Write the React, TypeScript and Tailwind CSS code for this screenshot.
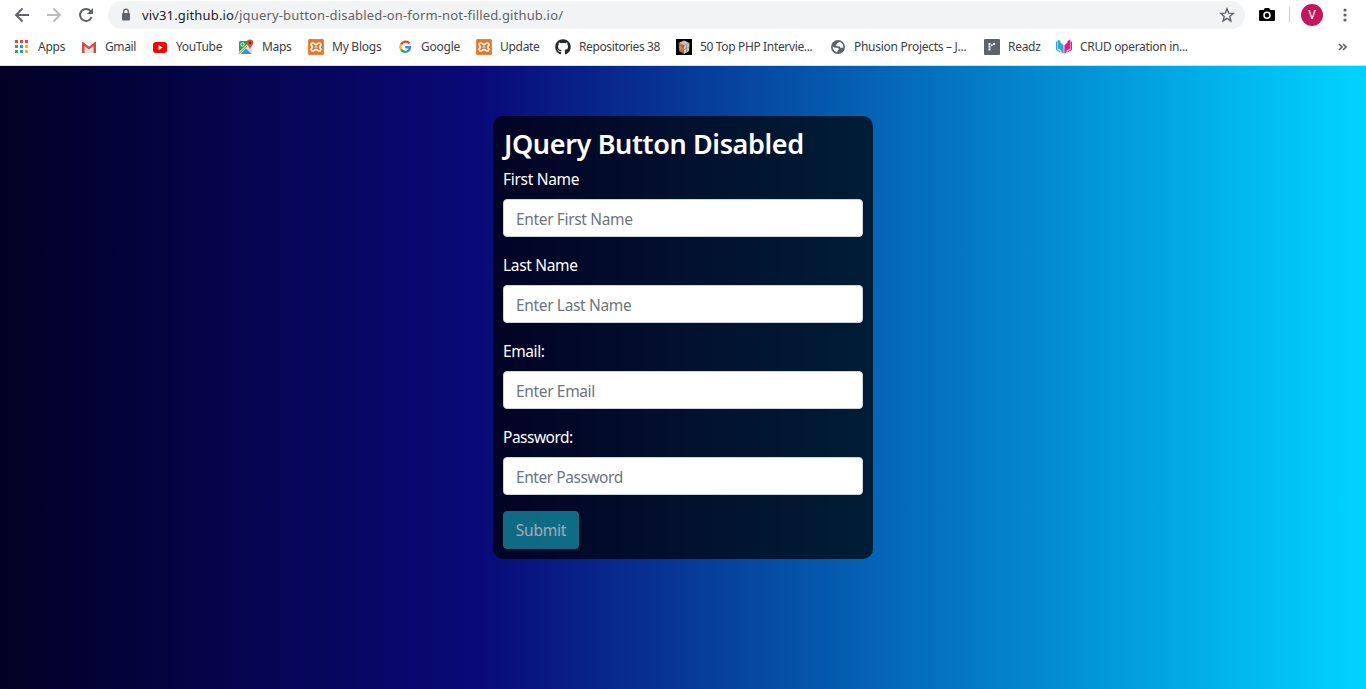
import React from "react";
import { FaGithub } from "react-icons/fa";

function Apps() {
  const c = ["#f44336", "#ea4335", "#f44336", "#34a853", "#2196f3", "#fbb305", "#34a853", "#2196f3", "#fbb305"];
  return (
    <svg width="16" height="16" viewBox="0 0 16 16" shapeRendering="crispEdges">
      {c.map((f, i) => (
        <rect key={i} x={1 + (i % 3) * 5} y={1 + Math.floor(i / 3) * 5} width="3" height="3" fill={f} />
      ))}
    </svg>
  );
}
const Gmail = () => (
  <svg width="16" height="16" viewBox="0 0 16 16">
    <path d="M2 3h12v11H2z" fill="#e3e3e3" />
    <path d="M2 3h12L8 8.500z" fill="#f6f6f6" />
    <path d="M1 14V3q0-.5.700-.300L8 7.800l6.300-5.100Q15 2.500 15 3v11h-2.500V7L8 10.600 3.500 7v7z" fill="#d54b3d" />
  </svg>
);
const YouTube = () => (
  <svg width="16" height="16" viewBox="0 0 16 16">
    <rect x="1" y="3" width="14" height="11" rx="3" fill="#f00" />
    <path d="M6.500 6v5l4.200-2.500z" fill="#fff" />
  </svg>
);
const Maps = () => (
  <svg width="16" height="16" viewBox="0 0 16 16">
    <rect x="1" y="2" width="13" height="13" rx="1" fill="#dfe3e6" />
    <path d="M2 2h8.500L9 7.500 1.500 14.500H1V3z" fill="#1ea362" />
    <path d="M2.500 15L8 9.500l5.500 5.500z" fill="#4285f4" />
    <path d="M1 13.500L10 5" stroke="#ffd34d" strokeWidth="1.100" />
    <circle cx="4.500" cy="5.500" r="1.700" fill="none" stroke="#fff" strokeWidth="0.900" />
    <path d="M12 0.500a3.300 3.300 0 0 1 3.300 3.300c0 2.400-2.700 3.500-3.300 7-.6-3.500-3.300-4.600-3.300-7A3.300 3.300 0 0 1 12 .5z" fill="#dc4b3e" />
    <circle cx="12" cy="3.700" r="1.200" fill="#7b231d" />
  </svg>
);
const Xampp = () => (
  <svg width="16" height="16" viewBox="0 0 16 16">
    <rect width="16" height="16" rx="1.500" fill="#ea6f20" />
    <rect x="0.800" y="0.800" width="14.400" height="14.400" rx="1" fill="none" stroke="#f3a572" strokeWidth="0.500" />
    <path d="M5 4C3.500 4 3 5 3.200 6L4.300 8 3.200 10c-.2 1 .3 2 1.800 2 1.200 0 1.700-.6 1.900-1.400h2.200c.2.800.7 1.400 1.900 1.400 1.500 0 2-1 1.800-2l-1.100-2 1.100-2c.2-1-.3-2-1.800-2-1.200 0-1.700.6-1.900 1.400H6.900C6.700 4.600 6.200 4 5 4z" fill="none" stroke="#fff" strokeWidth="1.700" strokeLinejoin="round" />
    <path d="M6.500 8h3" stroke="#fff" strokeWidth="1" />
  </svg>
);
const Google = () => (
  <svg width="16" height="16" viewBox="0 0 16 16" fill="none" strokeWidth="2.400">
    <path d="M12.400 4.400A5 5 0 0 0 4 5.600" stroke="#ea4335" />
    <path d="M4 5.500a5 5 0 0 0 0 5" stroke="#fbbc05" />
    <path d="M4 10.400a5 5 0 0 0 7.500 1.300" stroke="#34a853" />
    <path d="M11.300 11.800A5 5 0 0 0 13 8.200H8.200" stroke="#4285f4" />
  </svg>
);
const Cube = () => (
  <svg width="16" height="16" viewBox="0 0 16 16">
    <path d="M0 0h16v16H0z" fill="#000" />
    <path d="M2.500 4L8 1.500 13.500 4 8 6.500z" fill="#c9bdb6" />
    <path d="M2.500 4L8 6.500V15l-5-3z" fill="#b3603f" />
    <path d="M13.500 4L8 6.500V15l5-3z" fill="#cfc5bd" />
    <path d="M5 5v7.500M3 8l5 2.500" stroke="#e3a78e" strokeWidth=".6" />
    <path d="M10.500 6v8M8 10.500L13.300 8" stroke="#8d7f78" strokeWidth=".7" />
  </svg>
);
const Globe = () => (
  <svg width="16" height="16" viewBox="0 0 16 16">
    <circle cx="8" cy="8" r="7" fill="#5f6368" />
    <path d="M9.500 2.800L7.300 4.300v1.300H5.800v1.600h3.700l.9 1.500h2.900C13.500 6 12.200 3.600 9.500 2.800zM2.600 7.500c0 3 2 5.300 4.800 5.700v-1.400L9 10.200 7.800 8.800H4.700z" fill="#fff" />
  </svg>
);
const Readz = () => (
  <svg width="16" height="16" viewBox="0 0 16 16">
    <rect width="16" height="16" rx="1" fill="#5f6368" />
    <path d="M4.500 4h2v2h-2zM4.500 6.500h2v2.200h-2zM4.500 9.300h2v2.200h-2zM7 5.500h1.600v1.600H7zM9 4h2v2H9z" fill="#f5f5f5" />
  </svg>
);
const Book = () => (
  <svg width="16" height="16" viewBox="0 0 16 16">
    <path d="M0 2.500h1.200v8l3.300 1.800v1.200L0 11zM1.700.5L4.500 2v1.500l3.100 2.700V15l-2.300-2v-1.700L1.700 9.500z" fill="#2aa9dc" />
    <path d="M16 2.500h-1.200v8l-3.300 1.800v1.200L16 11zM14.300.5L11.500 2v1.500L8.400 6.200V15l2.300-2v-1.700l3.600-1.800z" fill="#ee1386" />
  </svg>
);

const marks = [
  { w: "w-[67px]", t: "Apps", s: "tracking-[-0.25px]", i: <Apps /> },
  { w: "w-[71px]", t: "Gmail", s: "tracking-[-0.4px]", i: <Gmail /> },
  { w: "w-[86px]", t: "YouTube", s: "tracking-[-0.35px]", i: <YouTube /> },
  { w: "w-[70px]", t: "Maps", s: "tracking-[-0.35px]", i: <Maps /> },
  { w: "w-[89px]", t: "My Blogs", s: "tracking-[-0.25px]", i: <Xampp /> },
  { w: "w-[79px]", t: "Google", s: "tracking-[-0.25px]", i: <Google /> },
  { w: "w-[79px]", t: "Update", s: "tracking-[-0.3px]", i: <Xampp /> },
  { w: "w-[121px]", t: "Repositories 38", s: "tracking-[-0.38px]", i: <FaGithub size={16} color="#24292e" /> },
  { w: "w-[154px]", t: "50 Top PHP Intervie...", s: "tracking-[-0.35px]", i: <Cube /> },
  { w: "w-[154px]", t: "Phusion Projects – J...", s: "tracking-[-0.28px]", i: <Globe /> },
  { w: "w-[72px]", t: "Readz", s: "tracking-[-0.3px]", i: <Readz /> },
  { w: "w-[140px]", t: "CRUD operation in...", s: "tracking-[-0.31px]", i: <Book /> },
];

const fields = [
  { label: "First Name", ph: "Enter First Name", type: "text", ls: "tracking-[-0.3px]", ps: "placeholder:tracking-[-0.35px]" },
  { label: "Last Name", ph: "Enter Last Name", type: "text", ls: "tracking-[-0.32px]", ps: "placeholder:tracking-[-0.35px]" },
  { label: "Email:", ph: "Enter Email", type: "text", ls: "tracking-[-0.4px]", ps: "placeholder:tracking-[-0.35px]" },
  { label: "Password:", ph: "Enter Password", type: "password", ls: "tracking-[-0.5px]", ps: "placeholder:tracking-[-0.45px]" },
];

export default function App() {
  return (
    <div className="flex h-[689px] w-[1366px] flex-col overflow-hidden bg-white font-['Noto_Sans',sans-serif]">
      <header className="flex h-[66px] flex-col border-b border-[#dadce0]">
        <div className="flex h-[30px] items-center">
          <svg width="108" height="30" viewBox="0 0 108 30" fill="none" strokeWidth="2" className="shrink-0">
            <path d="M29 15H16.500M22.500 8.500L16 15l6.500 6.500" stroke="#5f6368" />
            <path d="M47 15h12.500M53.500 8.500L60 15l-6.500 6.500" stroke="#babcbe" />
            <path d="M91 11.500A6 6 0 1 0 91.700 17" stroke="#5f6368" />
            <path d="M93 8v6h-6z" fill="#5f6368" />
          </svg>
          <div className="flex h-7 w-[1137px] items-center rounded-full bg-[#f1f3f4] pl-3 pr-2.5">
            <svg width="12" height="16" viewBox="0 0 12 16" className="mr-[10px] shrink-0">
              <rect x="2" y="6" width="8" height="7.500" rx="1" fill="#5f6368" />
              <path d="M3.700 6.500V4.500a2.300 2.300 0 0 1 4.600 0v2" fill="none" stroke="#5f6368" strokeWidth="1.300" />
            </svg>
            <span className="whitespace-nowrap text-[13px] leading-5 tracking-[0.155px] text-[#5f6368]">
              <span className="text-[#202124]">viv31.github.io</span>/jquery-button-disabled-on-form-not-filled.github.io/
            </span>
            <svg width="16" height="16" viewBox="0 0 16 16" className="ml-auto">
              <path d="M8 1.800l1.700 4.300 4.600.3-3.500 3 1.100 4.500L8 11.400l-3.900 2.500 1.100-4.500-3.500-3 4.600-.3z" fill="none" stroke="#5f6368" strokeWidth="1.400" />
            </svg>
          </div>
          <svg width="16" height="16" viewBox="0 0 16 16" className="ml-[14px]">
            <path d="M1 3h3.500L6 1h4l1.500 2H15q1 0 1 1v9q0 1-1 1H1q-1 0-1-1V4q0-1 1-1z" fill="#000" />
            <circle cx="8" cy="8.300" r="3" fill="none" stroke="#fff" strokeWidth="1.500" />
          </svg>
          <div className="ml-[14px] h-4 w-px bg-[#cbcdd0]" />
          <div className="ml-[11px] flex size-[22px] items-center justify-center rounded-full bg-[#c2185b] font-['Roboto',sans-serif] text-[12px] text-white">V</div>
          <svg width="4" height="14" viewBox="0 0 4 14" className="ml-[19.500px]" fill="#5f6368">
            <circle cx="2" cy="2" r="1.600" />
            <circle cx="2" cy="7" r="1.600" />
            <circle cx="2" cy="12" r="1.600" />
          </svg>
        </div>
        <div className="flex h-[34px] items-center pl-[14px] text-[12px] leading-4 text-[#3c4043]">
          {marks.map((m) => (
            <div key={m.t} className={`flex shrink-0 items-center gap-2 whitespace-nowrap ${m.w}`}>
              <span className="size-4 shrink-0">{m.i}</span>
              <span className={m.s}>{m.t}</span>
            </div>
          ))}
          <svg width="10" height="8" viewBox="0 0 10 8" className="ml-[142px]" fill="none" stroke="#5f6368" strokeWidth="1.700">
            <path d="M1 1l3 3-3 3M5 1l3 3-3 3" />
          </svg>
        </div>
      </header>
      <main className="flex flex-1 items-start justify-center bg-[linear-gradient(90deg,#020024_0%,#090979_35%,#00d4ff_100%)] pt-[50px]">
        <form className="flex h-[443px] w-[380px] flex-col rounded-[10px] bg-[rgba(0,0,0,0.7)] p-[10px] text-[15.5px] leading-6 text-white">
          <h1 className="mb-[7px] h-[34px] whitespace-nowrap pl-px text-[27px] font-semibold leading-[36px] tracking-[-0.36px]">JQuery Button Disabled</h1>
          {fields.map((f) => (
            <div key={f.label} className="mb-4 flex flex-col items-start">
              <label className={`mb-2 h-6 ${f.ls}`}>{f.label}</label>
              <input type={f.type} placeholder={f.ph} className={`h-[38px] w-full rounded-[4px] border border-[#ced4da] bg-white px-3 pb-[5px] pt-[7px] text-[15.5px] placeholder:text-[#6c757d] placeholder:opacity-100 ${f.ps}`} />
            </div>
          ))}
          <button type="button" disabled className="h-[38px] w-[76px] shrink-0 rounded-[4px] border border-[#17a2b8] bg-[#17a2b8] tracking-[-0.2px] opacity-65">Submit</button>
        </form>
      </main>
    </div>
  );
}
